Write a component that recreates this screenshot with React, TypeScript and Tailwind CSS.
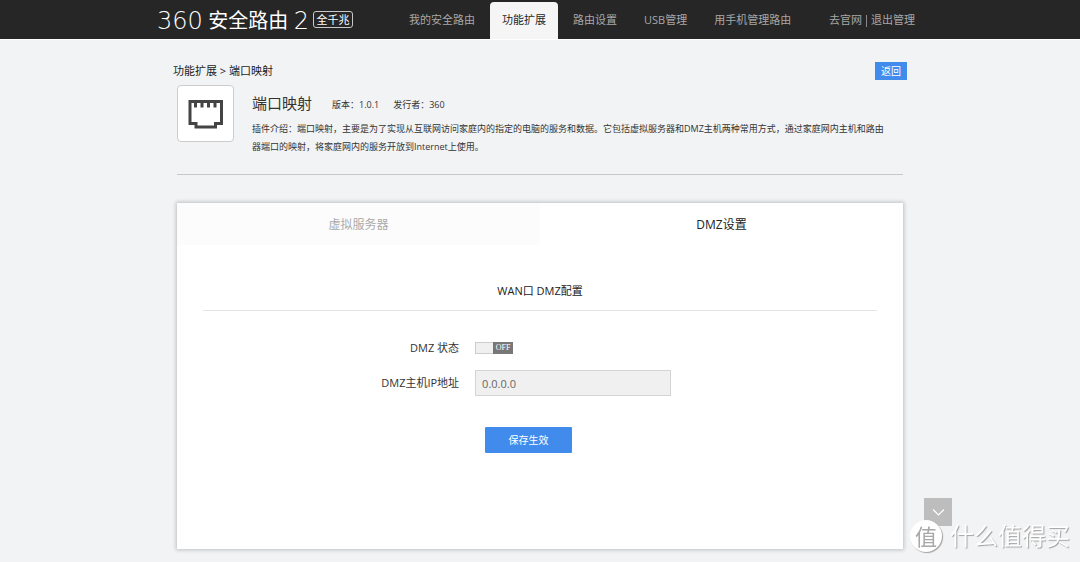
import { useState } from "react";

/* ── Icons ──────────────────────────────────────────────────── */
function PortIcon() {
  return (
    <svg
      className="h-[30px] w-[36px]"
      viewBox="0 0 36 30"
      fill="none"
      aria-hidden="true"
    >
      <path
        d="M2 2.500h31.500v22h-6v3.500h-19.500v-3.500h-6z"
        stroke="#444444"
        strokeWidth="3"
      />
      <path
        d="M7.500 3v5.500M14 3v5.500M20.500 3v5.500M27 3v5.500"
        stroke="#444444"
        strokeWidth="3"
      />
    </svg>
  );
}

function ChevronIcon() {
  return (
    <svg
      className="h-[7px] w-[13px]"
      viewBox="0 0 13 7"
      fill="none"
      stroke="#ffffff"
      strokeWidth="1.200"
      aria-hidden="true"
    >
      <path d="M1 0.500l5.500 5.500l5.500-5.500" />
    </svg>
  );
}

/* ── Navigation data ────────────────────────────────────────── */
const navItems = [
  { label: "我的安全路由", active: false },
  { label: "功能扩展", active: true },
  { label: "路由设置", active: false },
  { label: "USB管理", active: false },
  { label: "用手机管理路由", active: false },
];

function Header() {
  return (
    <header className="border-b border-white bg-[#262626] text-[11px] text-[#a8a8a8]">
      <div className="mx-auto flex h-[39px] max-w-[766px] items-stretch">
        <div className="flex items-center gap-1 text-white">
          <div className="flex w-[152px] items-center justify-between pt-0.5 text-[20px] leading-none">
            <span className="font-['DejaVu_Sans'] text-2xl font-extralight leading-none">
              360
            </span>
            <span>安全路由</span>
            <span className="font-['DejaVu_Sans'] text-2xl font-extralight leading-none">
              2
            </span>
          </div>
          <span className="flex h-[17px] w-10 items-center justify-center rounded-[3px] border border-[#c8c8c8] text-[11px] leading-none">
            全千兆
          </span>
        </div>

        <nav className="ml-11 flex gap-[3px] pt-0.5" aria-label="主导航">
          {navItems.map((item) => (
            <a
              key={item.label}
              href="#"
              aria-current={item.active ? "page" : undefined}
              className={
                item.active
                  ? "flex items-center rounded-t bg-[#f5f5f6] px-3 text-[#262626]"
                  : "flex items-center px-3"
              }
            >
              {item.label}
            </a>
          ))}
        </nav>

        <div className="ml-auto flex items-center gap-1 pr-2 pt-0.5">
          <a href="#">去官网</a>
          <span className="h-3 w-px bg-[#888888]" />
          <a href="#">退出管理</a>
        </div>
      </div>
    </header>
  );
}

/* ── Plugin intro ───────────────────────────────────────────── */
function PluginIntro() {
  return (
    <section aria-labelledby="plugin-heading">
      <div className="-mx-1 flex h-[18px] items-center justify-between text-[11px] text-[#1c1c1c]">
        <p>功能扩展 &gt; 端口映射</p>
        <button
          type="button"
          className="h-[18px] w-8 bg-[#418bed] text-[10px] leading-none text-white"
        >
          返回
        </button>
      </div>

      <div className="mt-[5px] flex gap-[18px] border-b border-[#c6c7c9] pb-[18px]">
        <div className="flex h-[57px] w-[57px] shrink-0 items-center justify-center rounded border border-[#cccccc] bg-white">
          <PortIcon />
        </div>
        <div className="min-w-0 pr-4 pt-2 text-[9px] text-[#333333]">
          <div className="flex items-center">
            <h1 id="plugin-heading" className="text-[15px] leading-5">
              端口映射
            </h1>
            <span className="ml-5 pt-1">版本：1.0.1</span>
            <span className="ml-3.5 pt-1">发行者：360</span>
          </div>
          <p className="mt-[7px] leading-[18px]">
            插件介绍：端口映射，主要是为了实现从互联网访问家庭内的指定的电脑的服务和数据。它包括虚拟服务器和DMZ主机两种常用方式，通过家庭网内主机和路由器端口的映射，将家庭网内的服务开放到Internet上使用。
          </p>
        </div>
      </div>
    </section>
  );
}

/* ── DMZ settings card ──────────────────────────────────────── */
function DmzCard() {
  const [enabled, setEnabled] = useState(false);

  return (
    <section className="mt-7 min-h-[346px] bg-white shadow-[0_0_4px_1px_rgba(0,0,0,0.22)]">
      <div className="flex h-[42px] text-xs" role="tablist">
        <button
          type="button"
          role="tab"
          aria-selected="false"
          className="flex-1 bg-[#fcfcfc] pt-0.5 text-[#aaaaaa]"
        >
          虚拟服务器
        </button>
        <button
          type="button"
          role="tab"
          aria-selected="true"
          className="flex-1 pt-0.5 text-[#222222]"
        >
          DMZ设置
        </button>
      </div>

      <form
        className="px-[26px] pt-9 text-[11px] text-[#333333]"
        onSubmit={(e) => e.preventDefault()}
      >
        <h2 className="border-b border-[#e4e4e4] pb-[9px] text-center leading-5 text-[#222222]">
          WAN口 DMZ配置
        </h2>

        <div className="grid grid-cols-[38%_1fr] items-center gap-x-4 gap-y-[9px] pt-6">
          <label htmlFor="dmz-state" className="text-right leading-[26px]">
            DMZ 状态
          </label>
          <label className="relative flex h-3 w-[38px] cursor-pointer border border-[#cccccc] bg-[#f0f0f0]">
            <input
              id="dmz-state"
              type="checkbox"
              className="sr-only"
              checked={enabled}
              onChange={(e) => setEnabled(e.target.checked)}
            />
            <span
              className={
                enabled
                  ? "-my-px -ml-px h-3 w-5 bg-[#418bed] text-center font-['Liberation_Serif'] text-[8px] leading-3 text-white"
                  : "-my-px -mr-px ml-auto h-3 w-5 bg-[#777777] text-center font-['Liberation_Serif'] text-[8px] leading-3 text-white"
              }
            >
              {enabled ? "ON" : "OFF"}
            </span>
          </label>

          <label htmlFor="dmz-ip" className="text-right">
            DMZ主机IP地址
          </label>
          <input
            id="dmz-ip"
            type="text"
            defaultValue="0.0.0.0"
            readOnly={!enabled}
            className="h-[26px] w-[196px] border border-[#d4d4d4] bg-[#f0f0f0] px-1.5 text-[#666666]"
          />

          <button
            type="submit"
            className="col-start-2 ml-2.5 mt-[22px] h-[26px] w-[87px] rounded-[1px] bg-[#418bed] text-[10px] text-white"
          >
            保存生效
          </button>
        </div>
      </form>
    </section>
  );
}

/* ── Page ───────────────────────────────────────────────────── */
export default function App() {
  return (
    <div className="min-h-screen bg-[#f2f3f5] font-['Open_Sans','Noto_Sans_CJK_SC',sans-serif]">
      <Header />

      <main className="mx-auto max-w-[726px] pb-3 pt-[22px]">
        <PluginIntro />
        <DmzCard />
      </main>

      <button
        type="button"
        aria-label="向下滚动"
        className="fixed bottom-9 right-32 flex h-7 w-7 items-center justify-center bg-[#bdbdbd]"
      >
        <ChevronIcon />
      </button>

      <div className="fixed bottom-2.5 right-2.5 flex items-center gap-2 text-2xl leading-8 text-white [text-shadow:1px_1px_1px_#a0a0a0]">
        <span className="flex h-8 w-8 items-center justify-center rounded-full bg-white text-[22px] text-[#a8a8a8] shadow-[1px_1px_1px_#a0a0a0] [text-shadow:none]">
          值
        </span>
        <span>什么值得买</span>
      </div>
    </div>
  );
}
